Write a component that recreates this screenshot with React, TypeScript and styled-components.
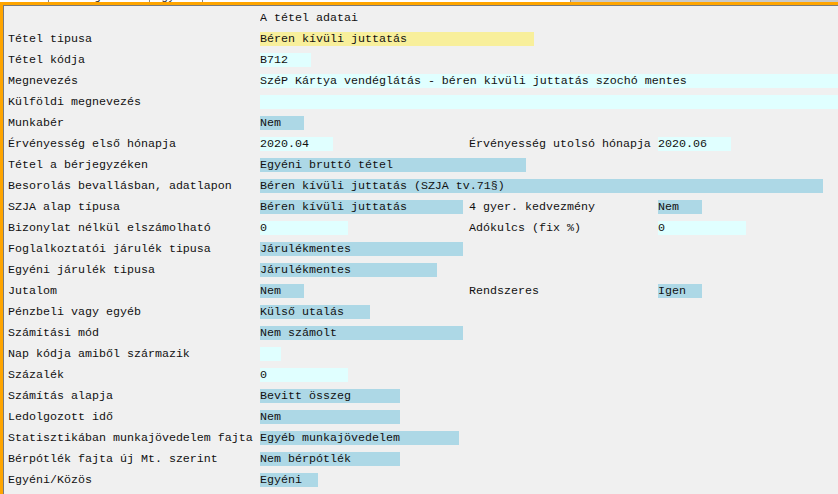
import React from "react";
import styled, { createGlobalStyle } from "styled-components";

const Global = createGlobalStyle`
  html, body { margin: 0; padding: 0; background: #f0f0f0; }
  body { width: 838px; height: 494px; overflow: hidden; }
`;

type Tone = "yellow" | "blue" | "cyan";

const toneColor: Record<Tone, string> = {
  yellow: "#f8ef9b",
  blue: "#add8e6",
  cyan: "#e0ffff",
};

const Page = styled.div`
  width: 838px;
  height: 494px;
  display: flex;
  flex-direction: column;
  overflow: hidden;
  font-family: "Liberation Mono", "Courier New", monospace;
  font-size: 11.67px;
  color: #111;
`;

const TabStrip = styled.div`
  height: 2px;
  display: flex;
  overflow: hidden;
  background: #c9c9c9;
`;

const Tab = styled.div<{ $w: number }>`
  width: ${(p) => p.$w}px;
  height: 2px;
  background: #ffffff;
  border-right: 1px solid #8a8a8a;
  overflow: hidden;
  flex-shrink: 0;
`;

const TabText = styled.span`
  display: block;
  line-height: 10px;
  margin-top: -8px;
  padding-left: 4px;
  white-space: nowrap;
  color: #333;
`;

const Frame = styled.div`
  flex: 1;
  display: flex;
  flex-direction: column;
  border-top: 3px solid #ffa500;
  border-left: 3px solid #ffa500;
`;

const Panel = styled.div`
  flex: 1;
  display: flex;
  flex-direction: column;
  border-top: 1px solid #7a7a7a;
  border-left: 1px solid #7a7a7a;
  background: #f0f0f0;
  padding-top: 1px;
`;

const Row = styled.div`
  height: 21px;
  display: flex;
  align-items: center;
  white-space: pre;
`;

const Label = styled.div`
  width: 252px;
  padding-left: 4px;
  flex-shrink: 0;
  line-height: 14px;
`;

const SubLabel = styled.div`
  width: 189px;
  flex-shrink: 0;
  line-height: 14px;
`;

const FirstCell = styled.div`
  width: 209px;
  flex-shrink: 0;
  display: flex;
`;

const Field = styled.div<{ $tone?: Tone; $w?: number }>`
  height: 14px;
  line-height: 14px;
  background: ${(p) => (p.$tone ? toneColor[p.$tone] : "transparent")};
  ${(p) => (p.$w ? `width: ${p.$w}px; flex-shrink: 0;` : "flex: 1;")}
  overflow: hidden;
  white-space: pre;
`;

type F = { text: string; tone: Tone; w?: number };
type RowDef = { label: string; field: F; second?: { label: string; field: F } };

const rows: RowDef[] = [
  { label: "Tétel tipusa", field: { text: "Béren kívüli juttatás", tone: "yellow", w: 274 } },
  { label: "Tétel kódja", field: { text: "B712", tone: "cyan", w: 51 } },
  {
    label: "Megnevezés",
    field: { text: "SzéP Kártya vendéglátás - béren kívüli juttatás szochó mentes", tone: "cyan" },
  },
  { label: "Külföldi megnevezés", field: { text: "", tone: "cyan" } },
  { label: "Munkabér", field: { text: "Nem", tone: "blue", w: 44 } },
  {
    label: "Érvényesség első hónapja",
    field: { text: "2020.04", tone: "cyan", w: 73 },
    second: { label: "Érvényesség utolsó hónapja", field: { text: "2020.06", tone: "cyan", w: 73 } },
  },
  { label: "Tétel a bérjegyzéken", field: { text: "Egyéni bruttó tétel", tone: "blue", w: 266 } },
  {
    label: "Besorolás bevallásban, adatlapon",
    field: { text: "Béren kívüli juttatás (SZJA tv.71§)", tone: "blue", w: 563 },
  },
  {
    label: "SZJA alap típusa",
    field: { text: "Béren kívüli juttatás", tone: "blue", w: 203 },
    second: { label: "4 gyer. kedvezmény", field: { text: "Nem", tone: "blue", w: 44 } },
  },
  {
    label: "Bizonylat nélkül elszámolható",
    field: { text: "0", tone: "cyan", w: 88 },
    second: { label: "Adókulcs (fix %)", field: { text: "0", tone: "cyan", w: 88 } },
  },
  { label: "Foglalkoztatói járulék tipusa", field: { text: "Járulékmentes", tone: "blue", w: 203 } },
  { label: "Egyéni járulék tipusa", field: { text: "Járulékmentes", tone: "blue", w: 177 } },
  {
    label: "Jutalom",
    field: { text: "Nem", tone: "blue", w: 44 },
    second: { label: "Rendszeres", field: { text: "Igen", tone: "blue", w: 44 } },
  },
  { label: "Pénzbeli vagy egyéb", field: { text: "Külső utalás", tone: "blue", w: 110 } },
  { label: "Számítási mód", field: { text: "Nem számolt", tone: "blue", w: 203 } },
  { label: "Nap kódja amiből származik", field: { text: "", tone: "cyan", w: 21 } },
  { label: "Százalék", field: { text: "0", tone: "cyan", w: 88 } },
  { label: "Számítás alapja", field: { text: "Bevitt összeg", tone: "blue", w: 140 } },
  { label: "Ledolgozott idő", field: { text: "Nem", tone: "blue", w: 140 } },
  {
    label: "Statisztikában munkajövedelem fajta",
    field: { text: "Egyéb munkajövedelem", tone: "blue", w: 199 },
  },
  { label: "Bérpótlék fajta új Mt. szerint", field: { text: "Nem bérpótlék", tone: "blue", w: 140 } },
  { label: "Egyéni/Közös", field: { text: "Egyéni", tone: "blue", w: 58 } },
];

const tabs = [
  { w: 48, t: "Adatok" },
  { w: 100, t: "Számfejtés" },
  { w: 52, t: "Egyéb" },
  { w: 367, t: "" },
];

export default function App() {
  return (
    <Page>
      <Global />
      <TabStrip>
        {tabs.map((t, i) => (
          <Tab key={i} $w={t.w}>
            <TabText>{t.t}</TabText>
          </Tab>
        ))}
      </TabStrip>
      <Frame>
        <Panel>
          <Row>
            <Label />
            <Field>A tétel adatai</Field>
          </Row>
          {rows.map((r, i) => (
            <Row key={i}>
              <Label>{r.label}</Label>
              {r.second ? (
                <>
                  <FirstCell>
                    <Field $tone={r.field.tone} $w={r.field.w}>
                      {r.field.text}
                    </Field>
                  </FirstCell>
                  <SubLabel>{r.second.label}</SubLabel>
                  <Field $tone={r.second.field.tone} $w={r.second.field.w}>
                    {r.second.field.text}
                  </Field>
                </>
              ) : (
                <Field $tone={r.field.tone} $w={r.field.w}>
                  {r.field.text}
                </Field>
              )}
            </Row>
          ))}
        </Panel>
      </Frame>
    </Page>
  );
}
